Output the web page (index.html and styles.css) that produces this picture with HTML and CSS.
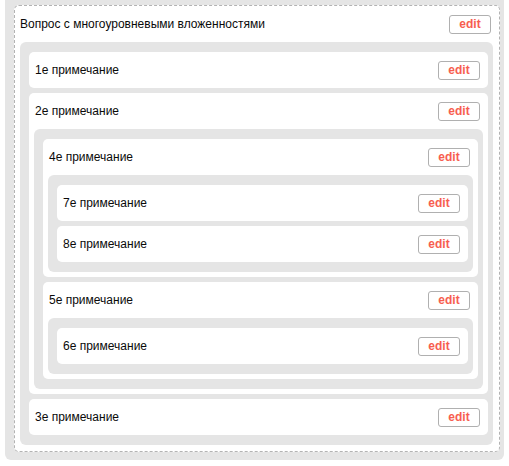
FILE: index.html
```html
<!DOCTYPE html>
<html lang="ru">
<head>
<meta charset="utf-8">
<title>Вопрос</title>
<link rel="stylesheet" href="styles.css">
</head>
<body>
<div class="outer">
  <div class="question">
    <div class="head"><span class="title">Вопрос с многоуровневыми вложенностями</span><button class="edit">edit</button></div>
    <div class="list">
      <div class="node">
        <div class="head"><span class="title">1е примечание</span><button class="edit">edit</button></div>
      </div>
      <div class="node">
        <div class="head"><span class="title">2е примечание</span><button class="edit">edit</button></div>
        <div class="list">
          <div class="node">
            <div class="head"><span class="title">4е примечание</span><button class="edit">edit</button></div>
            <div class="list">
              <div class="node">
                <div class="head"><span class="title">7е примечание</span><button class="edit">edit</button></div>
              </div>
              <div class="node">
                <div class="head"><span class="title">8е примечание</span><button class="edit">edit</button></div>
              </div>
            </div>
          </div>
          <div class="node">
            <div class="head"><span class="title">5е примечание</span><button class="edit">edit</button></div>
            <div class="list">
              <div class="node">
                <div class="head"><span class="title">6е примечание</span><button class="edit">edit</button></div>
              </div>
            </div>
          </div>
        </div>
      </div>
      <div class="node">
        <div class="head"><span class="title">3е примечание</span><button class="edit">edit</button></div>
      </div>
    </div>
  </div>
</div>
</body>
</html>
```
FILE: styles.css
```css
html, body {
  margin: 0;
  padding: 0;
  background: #fff;
}
body {
  font-family: "Liberation Sans", Arial, sans-serif;
  font-size: 12px;
  color: #0a0a0a;
}
.outer {
  margin: 0 5px 0 5px;
  padding: 5px 4px 8px 9px;
  background: #e5e5e5;
  border-radius: 0 0 6px 6px;
}
.question {
  background: #fff;
  border: 1px dashed #b3b3b3;
  border-radius: 5px;
  padding: 0 6px 6px 5px;
}
.list {
  background: #e5e5e5;
  border-radius: 6px;
  padding: 10px 5px 10px 9px;
  display: flex;
  flex-direction: column;
  gap: 5px;
}
.node {
  background: #fff;
  border-radius: 5px;
  padding: 0 5px 0 5px;
}
.node > .list {
  margin-bottom: 5px;
}
.head {
  height: 36px;
  display: flex;
  align-items: center;
  justify-content: space-between;
  padding: 0 3px 0 1px;
}
.question > .head {
  padding: 0 2px 0 0;
}
.title {
  line-height: 14px;
}
.edit {
  box-sizing: border-box;
  width: 42px;
  height: 19px;
  padding: 0;
  margin: 0;
  background: #fff;
  border: 1px solid #b0b0b0;
  border-radius: 3px;
  font-family: "Liberation Sans", Arial, sans-serif;
  font-size: 12px;
  font-weight: bold;
  color: #f75e4f;
  line-height: 17px;
  text-align: center;
}
```
